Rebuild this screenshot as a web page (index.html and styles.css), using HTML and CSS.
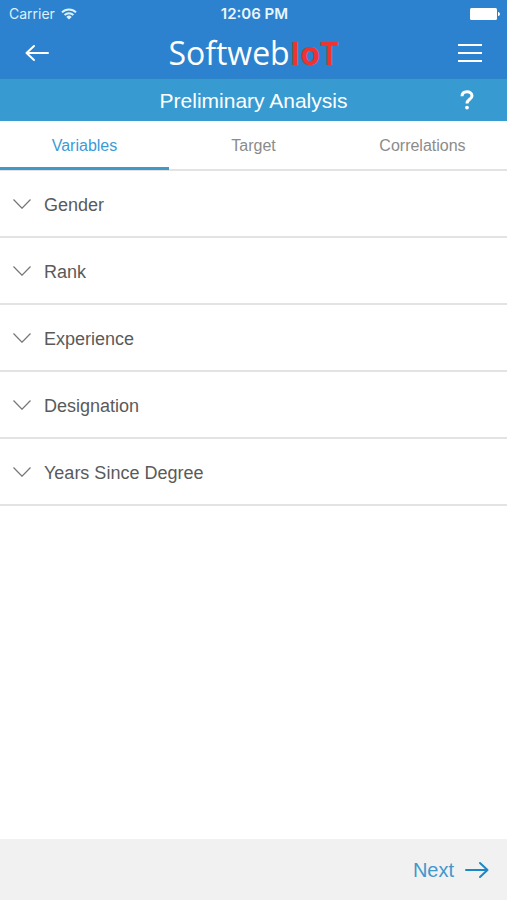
FILE: index.html
```html
<!DOCTYPE html>
<html lang="en">
<head>
  <meta charset="utf-8">
  <meta name="viewport" content="width=device-width, initial-scale=1">
  <title>Preliminary Analysis</title>
  <link rel="stylesheet" href="styles.css">
</head>
<body>
  <header class="top">
    <div class="status">
      <div class="carrier">
        <span>Carrier</span>
        <svg width="16" height="12" viewBox="0 0 16 12" fill="none" stroke="currentColor" stroke-width="2" aria-hidden="true">
          <path d="M1 4.400a10 10 0 0 1 14 0M3.600 7a6.300 6.300 0 0 1 8.800 0"/>
          <path d="M8 11.600 5.300 8.900a3.800 3.800 0 0 1 5.400 0z" fill="currentColor" stroke="none"/>
        </svg>
      </div>
      <span class="time">12:06 PM</span>
      <svg class="battery" width="30" height="12" viewBox="0 0 30 12" fill="currentColor" aria-hidden="true">
        <rect width="27" height="12" rx="1.500"/>
        <path d="M28 4c2.600 0 2.600 4 0 4z"/>
      </svg>
    </div>
    <div class="bar">
      <button class="icon-button" type="button" aria-label="Back">
        <svg width="24" height="18" viewBox="0 0 24 18" fill="none" stroke="currentColor" stroke-width="2" stroke-linecap="round" stroke-linejoin="round">
          <path d="M23 9H1.500M9 2 1.500 9 9 16"/>
        </svg>
      </button>
      <div class="brand">Softweb<b>IoT</b></div>
      <button class="icon-button" type="button" aria-label="Menu">
        <svg width="24" height="18" viewBox="0 0 24 18" fill="none" stroke="currentColor" stroke-width="2">
          <path d="M0 1h24M0 9h24M0 17h24"/>
        </svg>
      </button>
    </div>
  </header>

  <div class="title-bar">
    <h1>Preliminary Analysis</h1>
    <button class="help" type="button" aria-label="Help">
      <svg width="14" height="20" viewBox="0 0 14 20" fill="none" stroke="currentColor" stroke-width="3" aria-hidden="true">
        <path d="M2 6.300C2 3.300 4.200 1.800 7 1.800s5 1.500 5 4.100c0 3.300-5 3.600-5 7.500"/>
        <circle cx="7" cy="17.600" r="1.900" fill="currentColor" stroke="none"/>
      </svg>
    </button>
  </div>

  <nav class="tabs">
    <button class="tab active" type="button">Variables</button>
    <button class="tab" type="button">Target</button>
    <button class="tab" type="button">Correlations</button>
  </nav>

  <main class="list">
    <button class="row" type="button"><svg class="chevron" viewBox="0 0 18 10"><path d="M.5.5 9 9.200 17.500.5"/></svg><span>Gender</span></button>
    <button class="row" type="button"><svg class="chevron" viewBox="0 0 18 10"><path d="M.5.5 9 9.200 17.500.5"/></svg><span>Rank</span></button>
    <button class="row" type="button"><svg class="chevron" viewBox="0 0 18 10"><path d="M.5.5 9 9.200 17.500.5"/></svg><span>Experience</span></button>
    <button class="row" type="button"><svg class="chevron" viewBox="0 0 18 10"><path d="M.5.5 9 9.200 17.500.5"/></svg><span>Designation</span></button>
    <button class="row" type="button"><svg class="chevron" viewBox="0 0 18 10"><path d="M.5.5 9 9.200 17.500.5"/></svg><span>Years Since Degree</span></button>
  </main>

  <footer class="footer">
    <button class="next" type="button">
      <span>Next</span>
      <svg width="24" height="18" viewBox="0 0 24 18" fill="none" stroke="currentColor" stroke-width="2" stroke-linecap="round" stroke-linejoin="round" aria-hidden="true">
        <path d="M1 9h21.500M15 2l7.500 7-7.500 7"/>
      </svg>
    </button>
  </footer>
</body>
</html>
```
FILE: styles.css
```css
* {
  box-sizing: border-box;
}

body {
  margin: 0;
  min-height: 100vh;
  display: flex;
  flex-direction: column;
  background: #fff;
  color: #5a5a5a;
  font-family: "Liberation Sans", Arial, sans-serif;
}

button {
  margin: 0;
  padding: 0;
  border: 0;
  background: none;
  color: inherit;
  font: inherit;
  cursor: pointer;
}

svg {
  display: block;
  flex: none;
}

.top {
  background: #2c82ce;
  color: #fff;
  border-bottom: 1px solid #2c84c6;
}

.status {
  display: grid;
  grid-template-columns: 1fr auto 1fr;
  align-items: center;
  height: 27px;
  padding: 0 7px 0 9px;
  font-family: Inter, sans-serif;
}

.carrier {
  display: flex;
  align-items: center;
  gap: 6px;
  color: #dcf1fc;
  font-size: 14px;
}

.time {
  color: #e8f6fd;
  font-size: 15px;
  font-weight: 600;
}

.battery {
  justify-self: end;
}

.bar {
  display: grid;
  grid-template-columns: 24px 1fr 24px;
  align-items: center;
  height: 51px;
  padding: 0 25px;
}

.icon-button {
  height: 48px;
}

.brand {
  text-align: center;
  font-family: "Open Sans", sans-serif;
  font-size: 32px;
  line-height: 48px;
}

.brand b {
  color: #ee3330;
}

.title-bar {
  display: grid;
  grid-template-columns: 14px 1fr 14px;
  align-items: center;
  height: 42px;
  padding: 0 33px;
  background: #379bd1;
  color: #fff;
}

.title-bar h1 {
  grid-column: 2;
  margin: 0;
  padding-top: 2px;
  text-align: center;
  font-size: 21px;
  font-weight: 400;
}

.tabs {
  display: grid;
  grid-template-columns: repeat(3, 1fr);
  height: 50px;
  border-bottom: 2px solid #e3e3e3;
}

.tab {
  height: 49px;
  padding-top: 3px;
  border-bottom: 3px solid transparent;
  color: #8b8b8b;
  font-size: 16px;
}

.tab.active {
  color: #3a9bd8;
  border-bottom-color: #4199c9;
}

.list {
  flex: 1;
}

.row {
  display: flex;
  align-items: center;
  gap: 13px;
  width: 100%;
  height: 67px;
  padding: 0 13px;
  border-bottom: 2px solid #e3e3e3;
  font-size: 18px;
  text-align: left;
}

.row span {
  padding-top: 4px;
}

.chevron {
  width: 18px;
  height: 10px;
  fill: none;
  stroke: #777;
  stroke-width: 1.25;
}

.footer {
  display: flex;
  align-items: center;
  justify-content: flex-end;
  height: 61px;
  padding: 0 18px;
  background: #f1f1f1;
}

.next {
  display: flex;
  align-items: center;
  gap: 11px;
  color: #1c87c2;
  font-size: 20px;
}

.next span {
  padding-top: 2px;
  color: #4297cb;
}
```
